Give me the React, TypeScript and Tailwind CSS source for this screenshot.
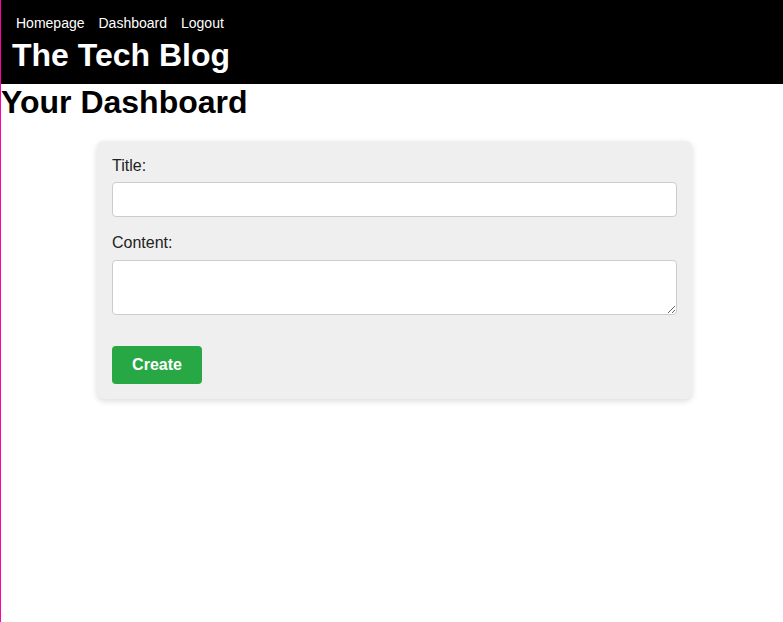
import { useState } from "react";

export default function App() {
  const [title, setTitle] = useState("");
  const [content, setContent] = useState("");

  return (
    <div className="min-h-[622px] border-l border-[#ff00aa] bg-white font-['Liberation_Sans',Arial,sans-serif] text-black">
      {/* Header */}
      <header className="h-[84px] bg-black pl-[11px] pt-[15px]">
        <nav className="ml-[4px] flex gap-[14px] text-[14px] leading-[16px] text-white">
          <a href="#">Homepage</a>
          <a href="#">Dashboard</a>
          <a href="#">Logout</a>
        </nav>
        <h1 className="mt-[6px] text-[32px] font-bold leading-[37px] text-white">The Tech Blog</h1>
      </header>

      <h2 className="text-[32px] font-bold leading-[37px]">Your Dashboard</h2>

      {/* Nieuwe post */}
      <form
        onSubmit={e => e.preventDefault()}
        className="ml-[96px] mt-[20px] w-[595px] rounded-[7px] bg-[#efefef] px-[15px] pb-[15px] pt-[16px] shadow-[0_2px_6px_rgba(0,0,0,0.15)]"
      >
        <label className="block text-[16px] leading-[18px] text-[#222]">Title:</label>
        <input
          type="text"
          value={title}
          onChange={e => setTitle(e.target.value)}
          className="mt-[7px] block h-[35px] w-full rounded-[4px] border border-[#ccc] bg-white px-2 outline-none"
        />

        <label className="mt-[17px] block text-[16px] leading-[18px] text-[#222]">Content:</label>
        <textarea
          value={content}
          onChange={e => setContent(e.target.value)}
          className="mt-[8px] block h-[55px] w-full rounded-[4px] border border-[#ccc] bg-white px-2 outline-none"
        />

        <button
          type="submit"
          className="mt-[31px] block h-[38px] w-[90px] rounded-[4px] bg-[#28a745] text-[16px] font-bold text-white"
        >
          Create
        </button>
      </form>
    </div>
  );
}
